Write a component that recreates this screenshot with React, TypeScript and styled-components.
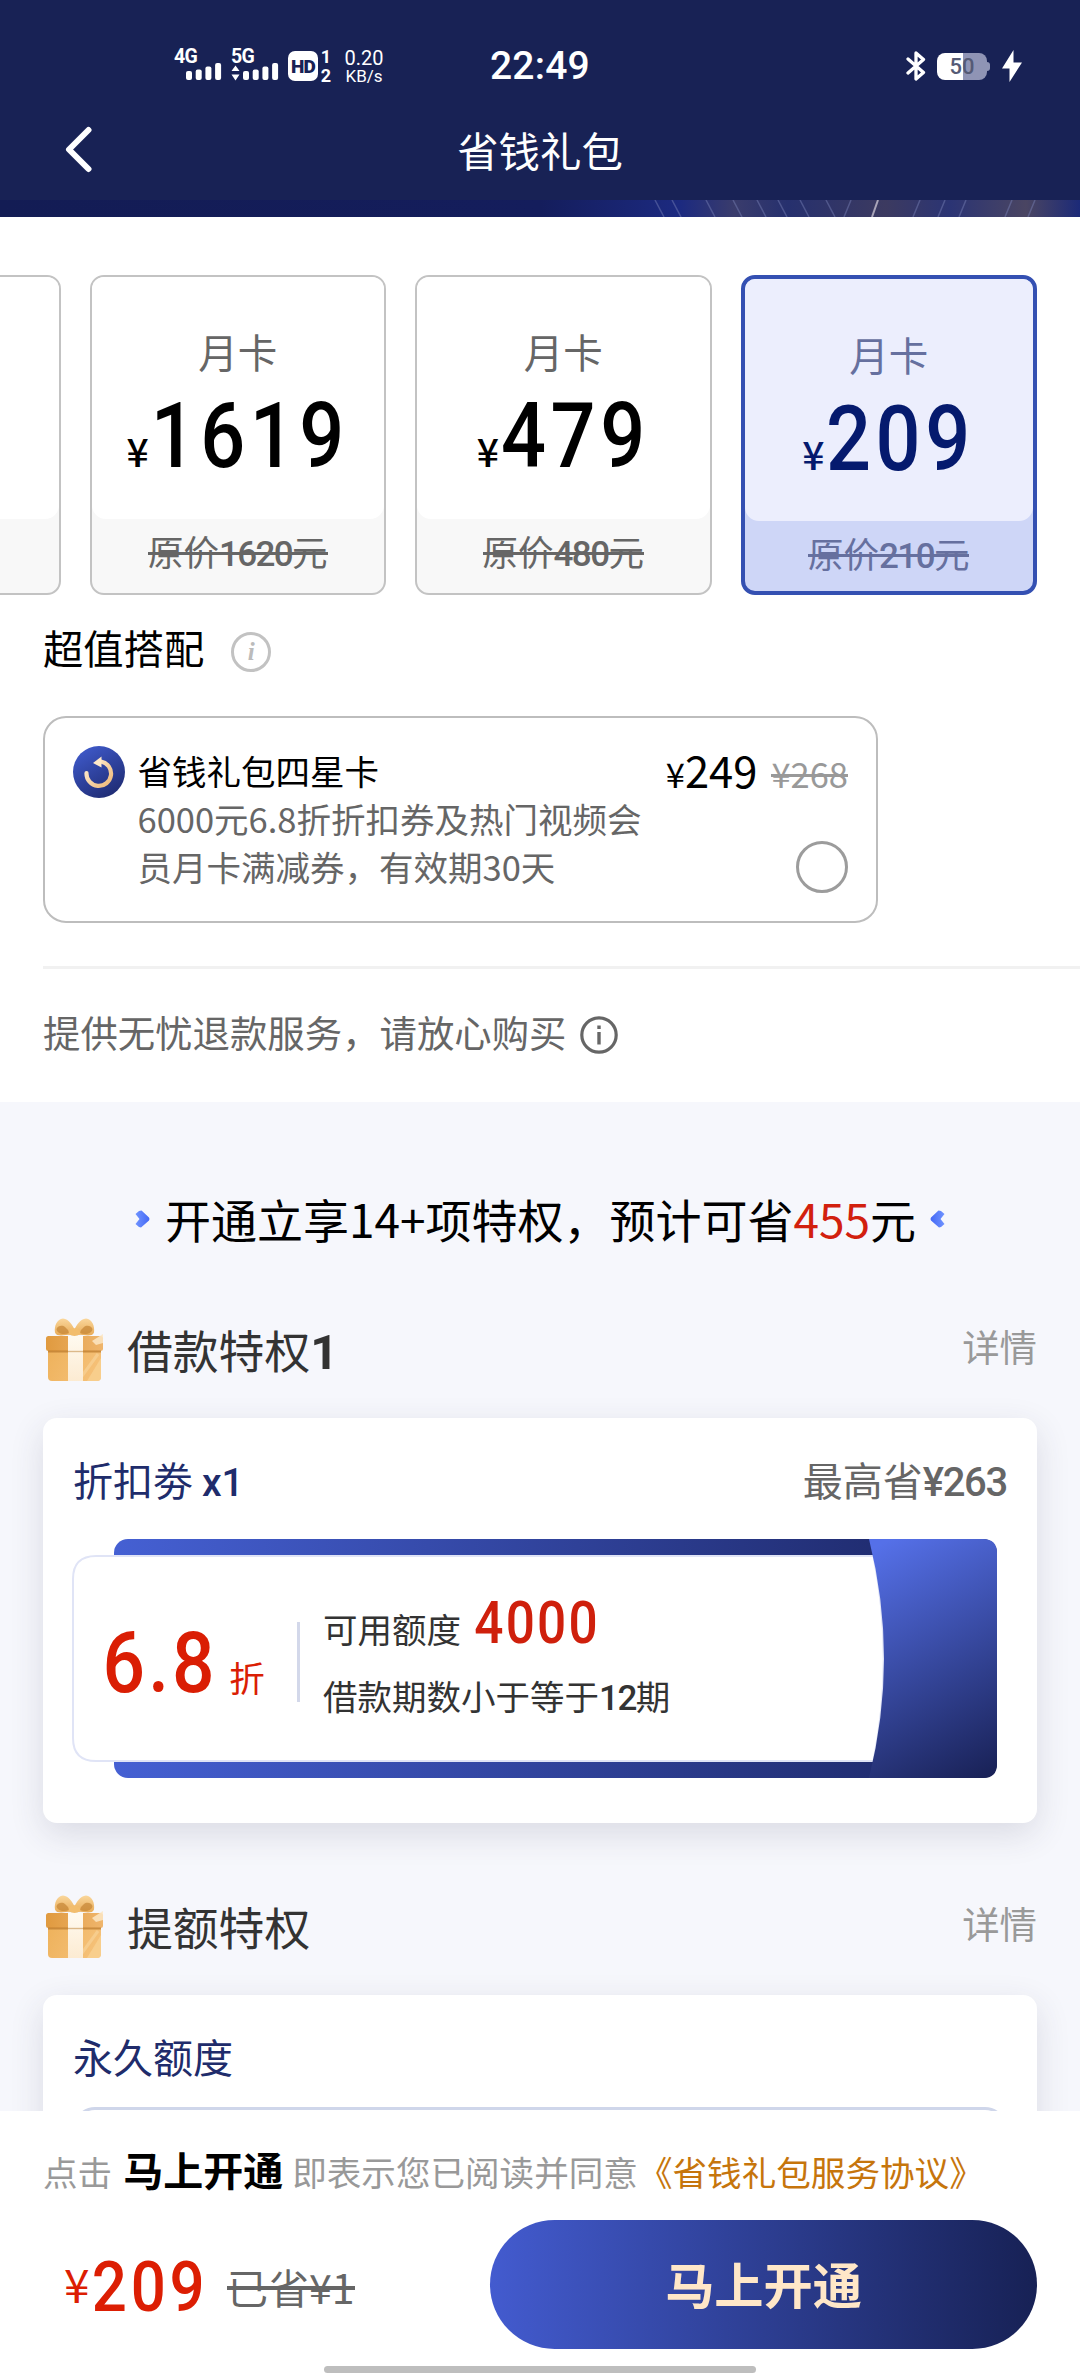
import React from "react";
import styled, { createGlobalStyle, css } from "styled-components";

const CJK = `"Noto Sans CJK SC", sans-serif`;
const DIGITS = `Roboto, "Noto Sans CJK SC", sans-serif`;

const GlobalStyle = createGlobalStyle`
  *, *::before, *::after { box-sizing: border-box; }
  body { margin: 0; background: #fff; font-family: ${CJK}; }
`;

const Screen = styled.div`
  width: 1080px;
  height: 2376px;
  display: flex;
  flex-direction: column;
  overflow: hidden;
  background: #fff;
  color: #000;
  white-space: nowrap;
`;

/* Latin digits set in their own face and size inside a Chinese line */
const Num = styled.span<{ $size: number; $track?: number; $weight?: number; $color?: string }>`
  font-family: ${DIGITS};
  font-size: ${(p) => p.$size}px;
  font-weight: ${(p) => p.$weight ?? 500};
  letter-spacing: ${(p) => p.$track ?? 0}px;
  line-height: 0;
  ${(p) => p.$color && css`color: ${p.$color};`}
`;

const NARROW = 0.87;

/* Large condensed digits; the side margins take back the width lost to the scaling */
const Figure = styled(Num)<{ $cells: number; $drop?: number }>`
  display: inline-block;
  transform: scaleX(${NARROW});
  vertical-align: ${(p) => -(p.$drop ?? 0)}px;
  margin: 0 ${(p) => (-(p.$cells * (0.5615 * p.$size + (p.$track ?? 0)) * (1 - NARROW)) / 2).toFixed(2)}px;
`;

/* ---------- header ---------- */
const Header = styled.header`
  flex: none;
  height: 200px;
  background: #182255;
  color: #fff;
`;

const StatusBar = styled.div`
  height: 100px;
  padding: 49px 58px 0 174px;
  display: grid;
  grid-template-columns: 316px 1fr auto;
  font-family: ${DIGITS};
`;

const StatusLeft = styled.div`
  display: flex;
  height: 34px;
`;

const SignalBox = styled.div<{ $gap: number }>`
  display: flex;
  flex-direction: column;
  width: 48px;
  padding-top: 1px;
  margin-right: ${(p) => p.$gap}px;
  font-size: 19.5px;
  font-weight: 700;
  line-height: 14px;
  letter-spacing: -0.6px;
`;

const Bars = styled.svg`
  display: block;
  margin-top: -2px;
  overflow: visible;
`;

const HdBadge = styled.div`
  width: 30px;
  height: 30px;
  margin-top: 2px;
  border-radius: 7px;
  background: #fff;
  color: #182255;
  font-size: 19px;
  font-weight: 900;
  line-height: 31px;
  text-align: center;
  letter-spacing: -0.8px;
`;

const SimColumn = styled.div`
  width: 14px;
  margin: 1px 0 0 1px;
  font-size: 18px;
  font-weight: 700;
  line-height: 13px;
  display: flex;
  flex-direction: column;
  justify-content: space-between;
  text-align: center;
  height: 32px;
`;

const Speed = styled.div`
  margin: 2px 0 0 11px;
  width: 40px;
  display: flex;
  flex-direction: column;
  align-items: center;
  font-size: 20px;
  line-height: 15px;
  gap: 4px;
`;

const SpeedUnit = styled.span`
  font-size: 17px;
  line-height: 12px;
`;

const Clock = styled.div`
  font-size: 39px;
  font-weight: 500;
  line-height: 34px;
  letter-spacing: 0.2px;
`;

const StatusRight = styled.div`
  display: flex;
  align-items: center;
  height: 34px;
`;

const Battery = styled.div`
  width: 50px;
  height: 27px;
  margin-left: 11px;
  border-radius: 8px;
  background: linear-gradient(90deg, #fff 52%, #8f94b5 52%);
  color: #555a75;
  font-size: 22px;
  font-weight: 500;
  line-height: 28px;
  text-align: center;
`;

const BatteryNub = styled.div`
  width: 3px;
  height: 9px;
  border-radius: 0 3px 3px 0;
  background: #8f94b5;
  margin-right: 12px;
`;

const TitleBar = styled.div`
  height: 100px;
  display: grid;
  grid-template-columns: 100px 1fr 100px;
`;

const BackIcon = styled.svg`
  margin: 25px 0 0 62px;
`;

const PageTitle = styled.h1`
  margin: 0;
  font-size: 41.4px;
  font-weight: 400;
  line-height: 98px;
  text-align: center;
`;

const Banner = styled.svg`
  flex: none;
  display: block;
`;

/* ---------- purchase area ---------- */
const Scroll = styled.main`
  flex: 1;
  min-height: 0;
  overflow: hidden;
`;

const Purchase = styled.section`
  height: 885px;
  padding-top: 58px;
`;

const Plans = styled.div`
  display: flex;
  gap: 29px;
  margin-left: -236px;
  height: 320px;
`;

const PlanCard = styled.div<{ $active?: boolean }>`
  flex: none;
  width: 296.5px;
  height: 320px;
  display: flex;
  flex-direction: column;
  overflow: hidden;
  border-radius: 14px;
  border: ${(p) => (p.$active ? "4px solid #3450b2" : "2px solid #c3c3c3")};
  background: ${(p) => (p.$active ? "#ced6f7" : "#f8f8f8")};
  text-align: center;
`;

const PlanTop = styled.div<{ $active?: boolean }>`
  height: 242px;
  border-radius: 0 0 14px 14px;
  padding-top: ${(p) => (p.$active ? 47 : 46)}px;
  background: ${(p) => (p.$active ? "#eceefd" : "#fff")};
  color: ${(p) => (p.$active ? "#051a6e" : "#000")};
`;

const PlanName = styled.div<{ $active?: boolean }>`
  font-size: 39.5px;
  line-height: 56px;
  color: ${(p) => (p.$active ? "#66709f" : "#666")};
`;

const PlanPrice = styled.div`
  margin-top: 27px;
  font-size: 39px;
  line-height: 88px;
`;

const Yen = styled.span`
  font-weight: 500;
  margin-right: 2px;
`;

const PlanOrigin = styled.div<{ $active?: boolean }>`
  padding-top: 7px;
  font-size: 35.5px;
  line-height: 50px;
  color: ${(p) => (p.$active ? "#66709f" : "#666")};
`;

const Struck = styled.span<{ $thick?: number; $rise?: number }>`
  display: inline-block;
  background: linear-gradient(currentColor, currentColor) no-repeat 0 calc(50% + ${(p) => p.$rise ?? 0}px) / 100%
    ${(p) => p.$thick ?? 3}px;
`;

const ComboTitle = styled.div`
  display: flex;
  align-items: center;
  gap: 27px;
  padding: 16px 0 2px 43px;
  font-size: 40.3px;
  line-height: 72px;
`;

const ItalicInfo = styled.span`
  width: 40px;
  height: 40px;
  margin-top: 9px;
  border: 3px solid #c2c2c2;
  border-radius: 50%;
  color: #bbb;
  font: italic 700 25px/33px "Liberation Serif", serif;
  text-align: center;
`;

const ComboCard = styled.div`
  width: 835px;
  height: 207px;
  margin: 31px 0 0 43px;
  padding: 28px 28px 0 28px;
  display: grid;
  grid-template-columns: 64.5px 1fr auto;
  border: 2px solid #bdbdbd;
  border-radius: 23px;
`;

const ComboName = styled.div`
  font-size: 34.5px;
  line-height: 48px;
`;

const ComboDesc = styled(ComboName)`
  color: #666;
`;

const ComboSide = styled.div`
  display: flex;
  flex-direction: column;
  align-items: flex-end;
  padding-top: 3px;
  font-size: 34.5px;
  line-height: 48px;
  margin-left: -60px;
`;

const BigPrice = styled.span`
  font-size: 43.5px;
  line-height: 0;
  margin-right: 14px;
`;

const OldPrice = styled(Struck)`
  color: #999;
`;

const Radio = styled.span`
  width: 52px;
  height: 52px;
  margin-top: 44px;
  border: 3px solid #9c9c9c;
  border-radius: 50%;
`;

const Divider = styled.div`
  height: 3px;
  margin: 43px 0 0 43px;
  background: #f1f1f1;
`;

const Refund = styled.div`
  display: flex;
  align-items: center;
  gap: 14px;
  padding: 36px 0 0 43px;
  font-size: 37.4px;
  line-height: 54px;
  color: #666;
`;

const InfoSvg = styled.svg`
  margin-top: 5px;
`;

/* ---------- privileges ---------- */
const Privileges = styled.section`
  height: 1100px;
  padding: 84px 43px 0;
  background: #f6f7fc;
`;

const Headline = styled.div`
  display: flex;
  justify-content: center;
  align-items: center;
  height: 70px;
  font-size: 46px;
  line-height: 70px;
`;

const HeadlineText = styled.span`
  margin: 0 14px 0 15px;
  padding-bottom: 6px;
`;

const Accent = styled.span`
  color: #d2200e;
`;

const GroupHead = styled.div<{ $top: number }>`
  display: flex;
  align-items: flex-start;
  height: 70px;
  margin-top: ${(p) => p.$top}px;
`;

const GroupName = styled.h2`
  margin: 0 0 0 21px;
  flex: 1;
  font-size: 45.8px;
  font-weight: 400;
  line-height: 67px;
  color: #333;
`;

const Detail = styled.a`
  font-size: 37.4px;
  line-height: 60px;
  color: #999;
`;

const Card = styled.div<{ $h: number; $top: number }>`
  height: ${(p) => p.$h}px;
  margin-top: ${(p) => p.$top}px;
  padding: 31px 30px 0;
  border-radius: 14px;
  background: #fff;
  box-shadow: 0 11px 34px rgba(50, 50, 75, 0.14);
`;

const CardHead = styled.div`
  display: flex;
  justify-content: space-between;
  font-size: 40px;
  line-height: 60px;
  color: #202c6b;
`;

const MaxSave = styled.span`
  color: #666;
`;

const Coupon = styled.div`
  display: grid;
  grid-template-columns: 925px;
  grid-template-rows: 239px;
  margin: 30px 0 0 -1px;
`;

const CouponArt = styled.svg`
  grid-area: 1 / 1;
  display: block;
  overflow: visible;
`;

const CouponBody = styled.div`
  grid-area: 1 / 1;
  z-index: 1;
  display: flex;
  align-items: center;
  padding-top: 6px;
`;

const Rate = styled.div`
  width: 225px;
  padding: 30px 0 0 30px;
  font-size: 35.5px;
  line-height: 100px;
  color: #da1e04;
`;

const RateUnit = styled.span`
  margin-left: 12px;
`;

const Rule = styled.div`
  width: 3px;
  height: 80px;
  background: #d3d8ea;
`;

const Terms = styled.div`
  margin-left: 23px;
  font-size: 34.5px;
  line-height: 67px;
  color: #333;
`;

const TermLabel = styled.span`
  margin-right: 13px;
`;

const QuotaBox = styled.div`
  height: 100px;
  margin-top: 21px;
  border: 3px solid #cfd6ea;
  border-radius: 22px;
`;

/* ---------- bottom bar ---------- */
const Footer = styled.footer`
  flex: none;
  height: 265px;
  background: #fff;
`;

const Agreement = styled.div`
  padding: 30px 0 0 43px;
  height: 109px;
  font-size: 34.6px;
  line-height: 60px;
  color: #999;
`;

const Strong = styled.b`
  margin: 0 9px 0 11px;
  font-size: 40px;
  line-height: 0;
  color: #000;
`;

const Link = styled.a`
  color: #c6750c;
`;

const PayRow = styled.div`
  display: flex;
  align-items: center;
  height: 129px;
  padding: 0 43px 0 64px;
`;

const Total = styled.div`
  width: 163px;
  padding-bottom: 4px;
  font-size: 46px;
  line-height: 80px;
  color: #dc1e03;
`;

const TotalYen = styled.span`
  margin-right: 2px;
`;

const Saved = styled.div`
  flex: 1;
  padding-top: 2px;
  font-size: 41px;
  line-height: 58px;
  color: #666;
`;

const BuyButton = styled.button`
  width: 547px;
  height: 129px;
  padding: 0 0 3px;
  border: 0;
  border-radius: 65px;
  background: linear-gradient(90deg, #435bcf, #172155);
  color: #ffe7c8;
  font: 700 49.2px/72px ${CJK};
`;

const HomeBar = styled.div`
  width: 432px;
  height: 7px;
  margin: 17px auto 0;
  border-radius: 4px;
  background: #bebebe;
`;

function SignalBars({ arrows }: { arrows?: boolean }) {
  const x0 = 12;
  return (
    <Bars width="48" height="18" viewBox="0 0 48 18">
      {arrows && <path d="M0.5 9 L4.5 3.5 L8.5 9Z M0.5 12.5 L4.5 18.5 L8.5 12.5Z" fill="#fff" />}
      {[9, 10.5, 13.5, 17].map((h, i) => (
        <rect key={i} x={x0 + i * 9.7} y={18 - h} width="6" height={h} rx="2" fill="#fff" />
      ))}
    </Bars>
  );
}

function Gift({ id }: { id: string }) {
  return (
    <svg width="63" height="66" viewBox="0 0 63 66">
      <defs>
        <linearGradient id={`${id}box`} x1="0" x2="1" y1="0" y2="0.3">
          <stop offset="0" stopColor="#eeb25c" />
          <stop offset="1" stopColor="#f5c077" />
        </linearGradient>
        <linearGradient id={`${id}lid`} x1="0" x2="1">
          <stop offset="0" stopColor="#e09a3f" />
          <stop offset="1" stopColor="#efb56c" />
        </linearGradient>
        <linearGradient id={`${id}bow`} x1="0" x2="0" y1="0" y2="1">
          <stop offset="0" stopColor="#fad79c" />
          <stop offset="1" stopColor="#e8ab57" />
        </linearGradient>
        <linearGradient id={`${id}rib`} x1="0" x2="0" y1="0" y2="1">
          <stop offset="0" stopColor="#fffaf0" />
          <stop offset="1" stopColor="#fcebd2" />
        </linearGradient>
      </defs>
      <path d="M5 34H58V61Q58 65 54 65H9Q5 65 5 61Z" fill={`url(#${id}box)`} />
      <path d="M44 65L58 42V61Q58 65 54 65Z" fill="#f9d191" opacity="0.8" />
      <path d="M39 60L55 38" stroke="#fadba5" strokeWidth="3" opacity="0.5" />
      <rect x="3" y="20" width="57" height="15" rx="2.5" fill={`url(#${id}lid)`} />
      <path d="M5 35.500H58" stroke="#b9782a" strokeWidth="2" opacity="0.7" />
      <path d="M25 20H40V65H25Z" fill={`url(#${id}rib)`} />
      <path d="M25 35.500H40" stroke="#dcb98a" strokeWidth="1.4" />
      <path d="M49 25L60 18V27L53 29Z" fill="#fbe6c4" opacity="0.85" />
      <path d="M30 19C24 18 14 22 12 16.500C11 10 14 3 20 2.500C26 3 29 9 31.500 13Z" fill={`url(#${id}bow)`} />
      <path d="M33 19C39 18 49 22 51 16.500C52 10 49 3 43 2.500C37 3 34 9 31.500 13Z" fill={`url(#${id}bow)`} />
      <path d="M26 17C21 19 14 18 13.500 13C15 9 20 9 22 11Q25 13 26 17Z" fill="#c48535" opacity="0.7" />
      <path d="M37 17C42 19 49 18 49.500 13C48 9 43 9 41 11Q38 13 37 17Z" fill="#c48535" opacity="0.7" />
      <path d="M26.500 14Q31.500 10.500 36.500 14L37.500 18Q31.500 22 25.500 18Z" fill="#f2bd6d" />
    </svg>
  );
}

const ArrowSvg = styled.svg<{ $flip?: boolean }>`
  margin-top: -4px;
  ${(p) => p.$flip && css`transform: scaleX(-1);`}
`;

function Arrow({ flip }: { flip?: boolean }) {
  return (
    <ArrowSvg $flip={flip} width="15" height="18" viewBox="0 0 15 18">
      <defs>
        <linearGradient id={flip ? "arrL" : "arrR"} x1="0" x2="1">
          <stop offset="0" stopColor="#6f93ff" />
          <stop offset="1" stopColor="#4468f5" />
        </linearGradient>
      </defs>
      <path
        d="M4 1L6.500 0.500L14 7.500Q15 9 14 10.500L6 17.500L4 17L0.500 14L4.500 9L0.500 4Z"
        fill={`url(#${flip ? "arrL" : "arrR"})`}
      />
    </ArrowSvg>
  );
}

function Logo() {
  return (
    <svg width="52" height="52" viewBox="0 0 52 52">
      <defs>
        <linearGradient id="logoBg" x1="0.2" y1="0" x2="0.8" y2="1">
          <stop offset="0" stopColor="#3f5acb" />
          <stop offset="1" stopColor="#1e2a70" />
        </linearGradient>
        <linearGradient id="logoFg" x1="0" y1="0" x2="1" y2="1">
          <stop offset="0" stopColor="#fff0d8" />
          <stop offset="1" stopColor="#eeb877" />
        </linearGradient>
      </defs>
      <circle cx="26" cy="26" r="26" fill="url(#logoBg)" />
      <path d="M13.500 27A12.300 12.300 0 1 0 28 15.500" fill="none" stroke="url(#logoFg)" strokeWidth="4.200" strokeLinecap="round" />
      <path d="M20 17L28.500 10.500V21.500Z" fill="#ffe9c8" />
    </svg>
  );
}

function Plan({ price, origin, active }: { price: string; origin: string; active?: boolean }) {
  return (
    <PlanCard $active={active}>
      <PlanTop $active={active}>
        <PlanName $active={active}>月卡</PlanName>
        <PlanPrice>
          <Yen>¥</Yen>
          <Figure $size={91} $track={5.2} $cells={price.length}>{price}</Figure>
        </PlanPrice>
      </PlanTop>
      <PlanOrigin $active={active}>
        <Struck $rise={2}>
          原价<Num $size={35} $track={-1.6}>{origin}</Num>元
        </Struck>
      </PlanOrigin>
    </PlanCard>
  );
}

export default function App() {
  return (
    <Screen>
      <GlobalStyle />
      <Header>
        <StatusBar>
          <StatusLeft>
            <SignalBox $gap={9}>
              4G
              <SignalBars />
            </SignalBox>
            <SignalBox $gap={9}>
              5G
              <SignalBars arrows />
            </SignalBox>
            <HdBadge>HD</HdBadge>
            <SimColumn>
              <span>1</span>
              <span>2</span>
            </SimColumn>
            <Speed>
              0.20
              <SpeedUnit>KB/s</SpeedUnit>
            </Speed>
          </StatusLeft>
          <Clock>22:49</Clock>
          <StatusRight>
            <svg width="20" height="30" viewBox="0 0 20 30">
              <path d="M2 8L17.500 21.500L10 28V2L17.500 8.500L2 22" fill="none" stroke="#fff" strokeWidth="3.300" strokeLinejoin="round" strokeLinecap="round" />
            </svg>
            <Battery>50</Battery>
            <BatteryNub />
            <svg width="20" height="32" viewBox="0 0 20 32">
              <path d="M11.500 0L0 18.500H7.500V32L20 12.500H11.500Z" fill="#fff" />
            </svg>
          </StatusRight>
        </StatusBar>
        <TitleBar>
          <BackIcon width="30" height="50" viewBox="0 0 30 50">
            <path d="M26.500 5L7 24.500L26.500 44" fill="none" stroke="#fff" strokeWidth="6" strokeLinecap="round" strokeLinejoin="round" />
          </BackIcon>
          <PageTitle>省钱礼包</PageTitle>
        </TitleBar>
      </Header>
      <Banner width="1080" height="17" viewBox="0 0 1080 17">
        <defs>
          <linearGradient id="ban" x1="0" x2="1">
            <stop offset="0" stopColor="#131c54" />
            <stop offset="0.5" stopColor="#141d5c" />
            <stop offset="0.63" stopColor="#1c2a80" />
            <stop offset="0.68" stopColor="#3a3c6c" />
            <stop offset="0.73" stopColor="#26306e" />
            <stop offset="0.82" stopColor="#3c3a60" />
            <stop offset="0.88" stopColor="#2b3474" />
            <stop offset="0.95" stopColor="#4a4562" />
            <stop offset="1" stopColor="#1c2a78" />
          </linearGradient>
        </defs>
        <rect width="1080" height="17" fill="url(#ban)" />
        <g stroke="#7a83b8" strokeWidth="1.500" opacity="0.45">
          {[655, 672, 706, 733, 757, 778, 800, 826, 851, 920, 945, 966, 1012, 1035].map((x, i) => (
            <line key={x} x1={x} y1="0" x2={x + (i < 8 ? 9 : -7)} y2="17" />
          ))}
        </g>
        <line x1="878" y1="0" x2="872" y2="17" stroke="#a9a4b8" strokeWidth="2" />
      </Banner>

      <Scroll>
        <Purchase>
          <Plans>
            <PlanCard>
              <PlanTop />
            </PlanCard>
            <Plan price="1619" origin="1620" />
            <Plan price="479" origin="480" />
            <Plan price="209" origin="210" active />
          </Plans>
          <ComboTitle>
            超值搭配 <ItalicInfo>i</ItalicInfo>
          </ComboTitle>
          <ComboCard>
            <Logo />
            <div>
              <ComboName>省钱礼包四星卡</ComboName>
              <ComboDesc>6000元6.8折折扣券及热门视频会</ComboDesc>
              <ComboDesc>员月卡满减券，有效期30天</ComboDesc>
            </div>
            <ComboSide>
              <span>
                ¥<BigPrice>249</BigPrice>
                <OldPrice $rise={2}>¥268</OldPrice>
              </span>
              <Radio />
            </ComboSide>
          </ComboCard>
          <Divider />
          <Refund>
            提供无忧退款服务，请放心购买
            <InfoSvg width="38" height="38" viewBox="0 0 38 38">
              <circle cx="19" cy="19" r="17.200" fill="none" stroke="#666" strokeWidth="3.200" />
              <path d="M19 16V28.500" stroke="#666" strokeWidth="3.400" />
              <path d="M19 9.500V13" stroke="#666" strokeWidth="3.400" />
            </InfoSvg>
          </Refund>
        </Purchase>

        <Privileges>
          <Headline>
            <Arrow />
            <HeadlineText>
              开通立享14+项特权，预计可省<Accent>455</Accent>元
            </HeadlineText>
            <Arrow flip />
          </Headline>
          <GroupHead $top={60}>
            <Gift id="g1" />
            <GroupName>
              借款特权<Num $size={49} $weight={700}>1</Num>
            </GroupName>
            <Detail>详情</Detail>
          </GroupHead>
          <Card $h={405} $top={32}>
            <CardHead>
              <span>
                折扣劵 <Num $size={39}>x1</Num>
              </span>
              <MaxSave>
                最高省<Num $size={40} $track={-1.3}>¥263</Num>
              </MaxSave>
            </CardHead>
            <Coupon>
              <CouponArt width="925" height="239" viewBox="0 0 925 239">
                <defs>
                  <linearGradient id="cpBack" x1="0" x2="1">
                    <stop offset="0" stopColor="#4560d3" />
                    <stop offset="0.88" stopColor="#202c70" />
                    <stop offset="1" stopColor="#1c2766" />
                  </linearGradient>
                  <linearGradient id="cpSide" gradientUnits="userSpaceOnUse" x1="800" y1="10" x2="925" y2="239">
                    <stop offset="0" stopColor="#5570e8" />
                    <stop offset="1" stopColor="#182054" />
                  </linearGradient>
                </defs>
                <rect x="42" y="0" width="883" height="239" rx="14" fill="url(#cpBack)" />
                <path d="M24 17H801.500Q822 119.500 801.500 222H24Q1 222 1 199V40Q1 17 24 17Z" fill="#fff" stroke="#e0e4f6" strokeWidth="2" />
                <path d="M797 0H911Q925 0 925 14V225Q925 239 911 239H797Q827 119.500 797 0Z" fill="url(#cpSide)" />
              </CouponArt>
              <CouponBody>
                <Rate>
                  <Figure $size={86} $track={3.5} $cells={2.5}>6.8</Figure>
                  <RateUnit>折</RateUnit>
                </Rate>
                <Rule />
                <Terms>
                  <div>
                    <TermLabel>可用额度</TermLabel>
                    <Figure $size={59} $track={2.5} $cells={4} $color="#cf200c">4000</Figure>
                  </div>
                  <div>
                    借款期数小于等于<Num $size={35} $track={-1.5}>12</Num>期
                  </div>
                </Terms>
              </CouponBody>
            </Coupon>
          </Card>
          <GroupHead $top={70}>
            <Gift id="g2" />
            <GroupName>提额特权</GroupName>
            <Detail>详情</Detail>
          </GroupHead>
          <Card $h={300} $top={32}>
            <CardHead>永久额度</CardHead>
            <QuotaBox />
          </Card>
        </Privileges>
      </Scroll>

      <Footer>
        <Agreement>
          点击<Strong>马上开通</Strong>即表示您已阅读并同意<Link>《省钱礼包服务协议》</Link>
        </Agreement>
        <PayRow>
          <Total>
            <TotalYen>¥</TotalYen>
            <Figure $size={71} $track={4.4} $cells={3} $drop={8}>209</Figure>
          </Total>
          <Saved>
            <Struck $thick={4} $rise={2}>已省¥1</Struck>
          </Saved>
          <BuyButton>马上开通</BuyButton>
        </PayRow>
        <HomeBar />
      </Footer>
    </Screen>
  );
}
